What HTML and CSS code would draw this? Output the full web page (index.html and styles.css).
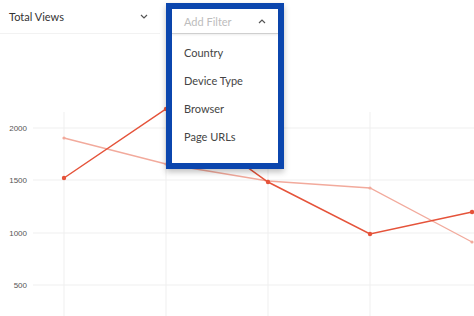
FILE: index.html
```html
<!DOCTYPE html>
<html lang="en">

<head>
    <meta charset="UTF-8">
    <meta name="viewport" content="width=device-width, initial-scale=1.0">
    <title>Views Chart</title>
    <link rel="stylesheet" href="styles.css">
</head>

<body>
    <div class="toolbar">
        <div class="metric-select">
            <span>Total Views</span>
            <svg class="chevron" width="8" height="5" viewBox="0 0 8 5"><path d="M1 1l3 3 3-3" /></svg>
        </div>
    </div>

    <div class="filter-menu">
        <div class="filter-head">
            <span>Add Filter</span>
            <svg class="chevron" width="8" height="5" viewBox="0 0 8 5"><path d="M1 4l3-3 3 3" /></svg>
        </div>
        <ul class="filter-list">
            <li>Country</li>
            <li>Device Type</li>
            <li>Browser</li>
            <li>Page URLs</li>
        </ul>
    </div>

    <svg class="chart" width="474" height="282" viewBox="0 34 474 282">
        <g class="grid">
            <line x1="33" y1="128" x2="474" y2="128" />
            <line x1="33" y1="180" x2="474" y2="180" />
            <line x1="33" y1="233" x2="474" y2="233" />
            <line x1="33" y1="285" x2="474" y2="285" />
            <line x1="64" y1="112" x2="64" y2="316" />
            <line x1="166" y1="112" x2="166" y2="316" />
            <line x1="268" y1="112" x2="268" y2="316" />
            <line x1="370" y1="112" x2="370" y2="316" />
        </g>
        <g class="axis">
            <text x="27" y="131">2000</text>
            <text x="27" y="183">1500</text>
            <text x="27" y="236">1000</text>
            <text x="27" y="288">500</text>
        </g>
        <polyline class="series-light" points="64,138 166,164 268,181 370,188 472,242" />
        <g class="dots-light">
            <circle cx="64" cy="138" r="1.6" />
            <circle cx="166" cy="164" r="1.6" />
            <circle cx="268" cy="181" r="1.6" />
            <circle cx="370" cy="188" r="1.6" />
            <circle cx="472" cy="242" r="1.6" />
        </g>
        <polyline class="series-dark" points="64,178 166,109 268,182 370,234 472,212" />
        <g class="dots-dark">
            <circle cx="64" cy="178" r="2.2" />
            <circle cx="166" cy="109" r="2.2" />
            <circle cx="268" cy="182" r="2.2" />
            <circle cx="370" cy="234" r="2.2" />
            <circle cx="472" cy="212" r="2.2" />
        </g>
    </svg>
</body>

</html>
```

FILE: styles.css
```css
body {
    margin: 0;
    font-family: Lato, "Open Sans", sans-serif;
    background-color: #fff;
    color: #444;
    overflow: hidden;
}

.toolbar {
    display: flex;
    height: 34px;
}

.metric-select {
    width: 160px;
    display: flex;
    align-items: center;
    justify-content: space-between;
    padding: 0 12px 0 9px;
    box-sizing: border-box;
    border-bottom: 1px solid #f2f2f2;
    font-size: 11px;
    color: #333;
}

.chevron path {
    fill: none;
    stroke: #555;
    stroke-width: 1.2;
}

.filter-menu {
    position: absolute;
    left: 166px;
    top: 3px;
    width: 106px;
    height: 154px;
    border: 6px solid #0b46ae;
    background-color: #fff;
    box-shadow: 0 3px 6px rgba(0, 0, 0, 0.25);
}

.filter-head {
    height: 24px;
    display: flex;
    align-items: center;
    justify-content: space-between;
    padding: 0 12px;
    border-bottom: 1px solid #cfcfcf;
    box-shadow: 0 1px 2px rgba(0, 0, 0, 0.08);
    font-size: 11px;
    color: #bdbdbd;
}

.filter-list {
    list-style: none;
    margin: 0;
    padding: 5px 0 0 0;
}

.filter-list li {
    height: 28px;
    line-height: 28px;
    padding-left: 12px;
    font-size: 11px;
    color: #444;
}

.chart {
    display: block;
}

.grid line {
    stroke: #efefef;
    stroke-width: 1;
}

.axis text {
    font-family: "Liberation Sans", Arial, sans-serif;
    font-size: 8px;
    fill: #555;
    text-anchor: end;
}

.series-dark {
    fill: none;
    stroke: #e5533a;
    stroke-width: 1.5;
}

.dots-dark circle {
    fill: #e5533a;
}

.series-light {
    fill: none;
    stroke: #f2aa9c;
    stroke-width: 1.3;
}

.dots-light circle {
    fill: #f2aa9c;
}
```
